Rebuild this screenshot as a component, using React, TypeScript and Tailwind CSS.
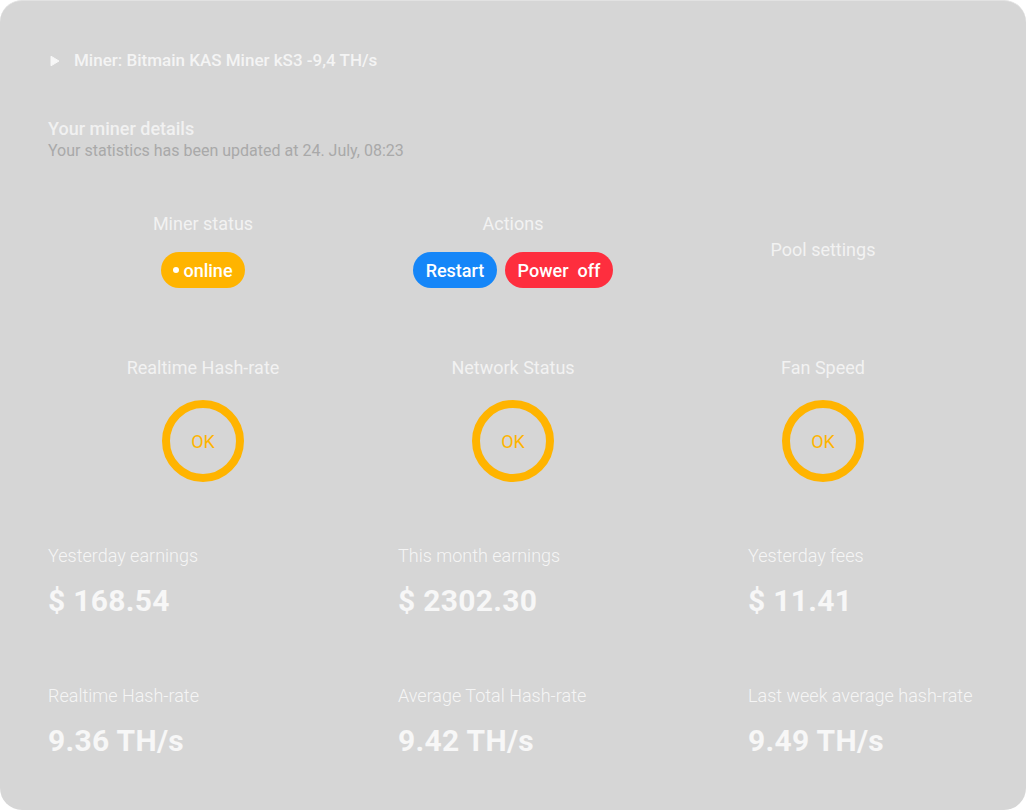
import React from 'react';

const font = { fontFamily: 'Roboto, "Noto Sans", sans-serif' };

function StatusCircle() {
  return (
    <div className="flex h-[82px] w-[82px] items-center justify-center rounded-full border-[8px] border-[#ffb400]">
      <span className="text-[18px] text-[#ffb400]">OK</span>
    </div>
  );
}

const stats = [
  { label: 'Yesterday earnings', value: '$ 168.54' },
  { label: 'This month earnings', value: '$ 2302.30' },
  { label: 'Yesterday fees', value: '$ 11.41' },
  { label: 'Realtime Hash-rate', value: '9.36 TH/s' },
  { label: 'Average Total Hash-rate', value: '9.42 TH/s' },
  { label: 'Last week average hash-rate', value: '9.49 TH/s' },
];

export default function App() {
  return (
    <div className="min-h-[810px] w-[1026px] bg-white" style={font}>
      <div className="h-[810px] rounded-[22px] border-t border-[#e2e2e2] bg-[#d6d6d6] px-12 pt-12">
        {/* Header */}
        <div className="flex h-6 items-center">
          <svg width="10" height="12" viewBox="0 0 10 12" className="ml-[2px]">
            <path d="M1 1.2 L9 6 L1 10.8 Z" fill="#f7f7f7" stroke="#f7f7f7" strokeWidth="1" strokeLinejoin="round" />
          </svg>
          <span className="ml-[14px] text-[17px] font-medium text-[#f4f4f4]">
            Miner: Bitmain KAS Miner kS3 -9,4 TH/s
          </span>
        </div>

        <div className="mt-[44px]">
          <div className="text-[18px] font-medium leading-6 text-[#f1f1f1]">Your miner details</div>
          <div className="text-base leading-5 text-[#a9a9a9]">
            Your statistics has been updated at 24. July, 08:23
          </div>
        </div>

        {/* Status row */}
        <div className="mt-[51px] grid grid-cols-3">
          <div className="flex flex-col items-center">
            <div className="text-[18px] leading-6 text-[#f2f2f2]">Miner status</div>
            <div className="mt-4 flex h-9 w-[84px] items-center justify-center gap-1 rounded-full bg-[#ffb400] text-[18px] font-medium text-white">
              <span className="h-[6px] w-[6px] rounded-full bg-white" />
              online
            </div>
          </div>
          <div className="flex flex-col items-center">
            <div className="text-[18px] leading-6 text-[#f2f2f2]">Actions</div>
            <div className="mt-4 flex gap-2">
              <button className="flex h-9 w-[84px] items-center justify-center rounded-full bg-[#1586f8] text-[18px] font-medium text-white">
                Restart
              </button>
              <button className="flex h-9 w-[108px] items-center justify-center rounded-full bg-[#fe2e3e] text-[18px] font-medium text-white">
                Power&nbsp;&nbsp;off
              </button>
            </div>
          </div>
          <div className="flex items-center justify-center">
            <div className="text-[18px] leading-6 text-[#f2f2f2]">Pool settings</div>
          </div>
        </div>

        {/* Health row */}
        <div className="mt-[68px] grid grid-cols-3">
          {['Realtime Hash-rate', 'Network Status', 'Fan Speed'].map((l) => (
            <div key={l} className="flex flex-col items-center">
              <div className="text-[18px] leading-6 text-[#f2f2f2]">{l}</div>
              <div className="mt-5">
                <StatusCircle />
              </div>
            </div>
          ))}
        </div>

        {/* Stats */}
        <div className="mt-[62px] grid grid-cols-[350px_350px_1fr] gap-y-[65px]">
          {stats.map((s) => (
            <div key={s.label}>
              <div className="text-[18px] font-light leading-6 text-[#f5f5f5]">{s.label}</div>
              <div className="mt-[15px] text-[30px] font-bold leading-9 tracking-[0.01em] text-[#f7f7f7]">
                {s.value}
              </div>
            </div>
          ))}
        </div>
      </div>
    </div>
  );
}
